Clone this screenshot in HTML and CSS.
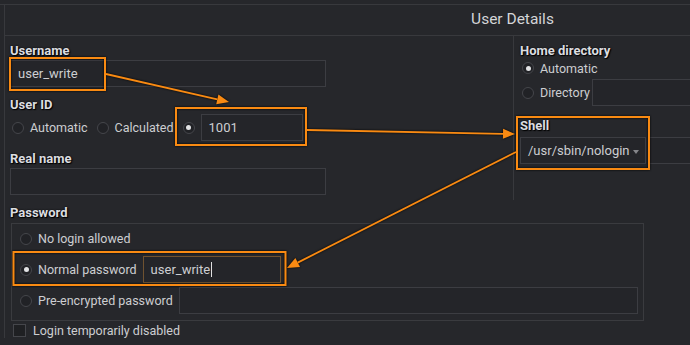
FILE: index.html
```html
<!DOCTYPE html>
<html>
    <head>
        <meta charset="utf-8">
        <meta name="viewport" content="width=device-width, initial-scale=1">
        <title>User Details</title>
        <link rel="stylesheet" href="styles.css">
    </head>
    <body>
        <div class="window">
            <div class="dialog">
                <div class="dialog-title">User Details</div>
                <div class="columns">
                    <div class="col-main">
                        <div class="field">
                            <div class="field-label">Username</div>
                            <div class="text-input wide">user_write</div>
                        </div>
                        <div class="field">
                            <div class="field-label">User ID</div>
                            <div class="choice-row">
                                <span class="choice"><span class="radio"></span>Automatic</span>
                                <span class="choice"><span class="radio"></span>Calculated</span>
                                <span class="choice"><span class="radio checked"></span><span class="text-input uid">1001</span></span>
                            </div>
                        </div>
                        <div class="field last">
                            <div class="field-label">Real name</div>
                            <div class="text-input wide"></div>
                        </div>
                    </div>
                    <div class="col-side">
                        <div class="field-label">Home directory</div>
                        <div class="choice home-auto"><span class="radio checked"></span>Automatic</div>
                        <div class="choice home-dir"><span class="radio"></span>Directory<span class="text-input grow"></span></div>
                        <div class="field-label shell-label">Shell</div>
                        <div class="shell-row">
                            <div class="text-input select">/usr/sbin/nologin<span class="drop-arrow"></span></div>
                            <div class="text-input shell-extra"></div>
                        </div>
                    </div>
                </div>
                <div class="password">
                    <div class="field-label">Password</div>
                    <div class="pw-frame">
                        <div class="pw-row"><span class="radio"></span>No login allowed</div>
                        <div class="pw-row"><span class="radio checked"></span>Normal password<span class="text-input pw focused">user_write<span class="cursor"></span></span></div>
                        <div class="pw-row"><span class="radio"></span>Pre-encrypted password<span class="text-input grow"></span></div>
                    </div>
                    <div class="check-row"><span class="checkbox"></span>Login temporarily disabled</div>
                </div>
            </div>
        </div>

        <!-- orange call-outs drawn over the dialog -->
        <svg class="annotations" width="690" height="345" viewBox="0 0 690 345">
            <g fill="none" stroke="#f98a12" stroke-width="2">
                <rect x="10" y="58" width="95" height="32"/>
                <rect x="176" y="108" width="130" height="37"/>
                <rect x="517" y="117" width="132" height="52"/>
                <rect x="13.5" y="252" width="272" height="33"/>
            </g>
            <g stroke="#f98a12" stroke-width="1.8">
                <line x1="106" y1="74" x2="217.3" y2="99.3"/>
                <line x1="307" y1="130" x2="503" y2="133.8"/>
                <line x1="516" y1="152" x2="297.7" y2="262.6"/>
            </g>
            <g fill="#f98a12">
                <polygon points="229,102 216.2,104.2 218.4,94.4"/>
                <polygon points="515,134 502.9,138.8 503.1,128.8"/>
                <polygon points="287,268 295.4,258.1 300,267.1"/>
            </g>
        </svg>
    </body>
</html>
```

FILE: styles.css
```css
*, ::after, ::before {
    box-sizing: border-box;
}
html, body {
    margin: 0;
    overflow: hidden;
}
body {
    position: relative;
    width: 690px;
    height: 345px;
    padding-top: 4px;
    background: #26272b;
    color: #cdced1;
    font-family: Roboto, "Liberation Sans", sans-serif;
    font-size: 12.5px;
}
.window {
    width: 690px;
    height: 341px;
    overflow: hidden;
    border-top: 1px solid #38393d;
    padding-left: 4px;
}
.dialog {
    width: 1016px;
    border-left: 1px solid #38393d;
}
.dialog-title {
    height: 31px;
    line-height: 29px;
    border-bottom: 1px solid #38393d;
    text-align: center;
    font-size: 15.5px;
    color: #d4d5d8;
}
.columns {
    display: grid;
    grid-template-columns: 508px 1fr;
}
.col-main {
    padding: 7px 0 5px 5px;
}
.col-side {
    border-left: 1px solid #38393d;
    padding: 7px 0 0 6px;
}
.field {
    margin-bottom: 10px;
}
.field.last {
    margin-bottom: 0;
}
.field-label {
    font-size: 13px;
    font-weight: bold;
    line-height: 16px;
    margin-bottom: 1px;
    color: #dcdde0;
    text-shadow: 0 0 2px #000, 1px 1px 1px #000;
}
.text-input {
    display: flex;
    align-items: center;
    height: 27px;
    padding: 0 7px;
    border: 1px solid #3c3d42;
    background: #242529;
    color: #cdced1;
    font-size: 13px;
}
.text-input.wide {
    width: 316px;
}
.choice-row {
    display: flex;
    align-items: center;
    height: 27px;
    padding-left: 2px;
}
.choice {
    display: flex;
    align-items: center;
    margin-right: 9px;
}
.radio {
    position: relative;
    width: 12px;
    height: 12px;
    margin-right: 6px;
    border: 1px solid #45464b;
    border-radius: 50%;
    background: #212226;
    flex: none;
}
.radio.checked::after {
    content: "";
    position: absolute;
    left: 2.5px;
    top: 2.5px;
    width: 5px;
    height: 5px;
    border-radius: 50%;
    background: #e2e3e5;
}
.text-input.uid {
    width: 102px;
}
.home-auto {
    height: 16px;
    margin: 0 0 3px 2px;
}
.home-dir {
    height: 27px;
    margin-left: 2px;
}
.home-dir .text-input {
    margin-left: 2px;
}
.grow {
    flex: 1;
}
.shell-label {
    margin-top: 12px;
    margin-bottom: 3px;
}
.shell-row {
    display: flex;
    gap: 3px;
}
.text-input.select {
    width: 126px;
    justify-content: space-between;
    padding-right: 6px;
}
.drop-arrow {
    width: 0;
    height: 0;
    margin-top: 2px;
    border-left: 3px solid transparent;
    border-right: 3px solid transparent;
    border-top: 4px solid #85868a;
}
.shell-extra {
    width: 300px;
}
.password {
    margin-top: 5px;
    padding-left: 5px;
}
.password .field-label {
    margin-bottom: 2px;
}
.pw-frame {
    width: 633px;
    margin-left: 1px;
    padding: 1px 5px 6px 8px;
    border: 1px solid #3a3b3f;
    display: flex;
    flex-direction: column;
    gap: 4px;
}
.pw-row {
    display: flex;
    align-items: center;
    height: 27px;
}
.pw-row .text-input {
    margin-left: 6px;
}
.text-input.pw {
    width: 138px;
}
.text-input.focused {
    border-color: #6f5230;
}
.cursor {
    width: 1px;
    height: 15px;
    margin-left: 1px;
    background: #e0e0e0;
}
.check-row {
    display: flex;
    align-items: center;
    height: 16px;
    margin-top: 1px;
    padding-left: 3px;
}
.checkbox {
    width: 13px;
    height: 13px;
    margin-right: 7px;
    border: 1px solid #45464b;
    background: #1f2023;
}
.annotations {
    position: absolute;
    left: 0;
    top: 0;
    pointer-events: none;
    filter: drop-shadow(0 0 1px #000);
}
```
